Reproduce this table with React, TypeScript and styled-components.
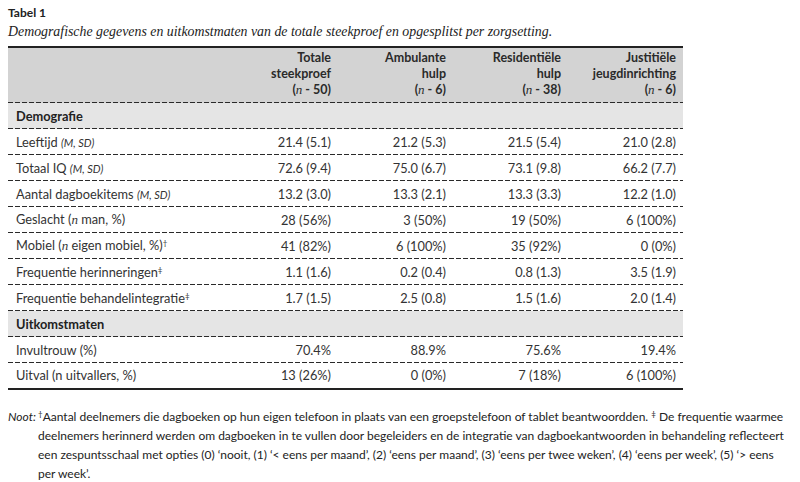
import React from "react";
import styled, { createGlobalStyle } from "styled-components";

const Global = createGlobalStyle`
  html, body { margin: 0; padding: 0; background: #fff; }
  body { font-family: Lato, "Open Sans", sans-serif; color: #2a2a2a; }
`;

const Page = styled.div`
  padding: 5px 8px 0 8px;
  width: 784px;
`;

const Title = styled.div`
  font-family: Lato, sans-serif;
  font-weight: 700;
  font-size: 12px;
  line-height: 15px;
  color: #222;
`;

const Caption = styled.div`
  font-family: "Liberation Serif", "DejaVu Serif", serif;
  font-style: italic;
  font-size: 13.85px;
  line-height: 20px;
  margin-top: 2px;
  color: #222;
`;

const dash = `repeating-linear-gradient(to right, #2a2a2a 0 5px, transparent 5px 7px)`;

const Table = styled.table`
  margin-top: 4px;
  width: 667px;
  border-collapse: collapse;
  border-top: 2px solid #222;
  border-bottom: 2px solid #222;
  table-layout: fixed;
  font-size: 12.8px;
`;

const HeadRow = styled.tr`
  background-color: #d3d3d3;
  background-image: ${dash};
  background-size: 100% 1px;
  background-position: left bottom;
  background-repeat: no-repeat;
`;

const HeadCell = styled.th`
  text-align: right;
  vertical-align: bottom;
  font-weight: 700;
  font-size: 12.5px;
  line-height: 16px;
  padding: 2px 7px 5px 0;
  height: 47px;
  color: #2a2a2a;
`;

const N = styled.i`
  font-family: "Liberation Serif", serif;
  font-weight: 400;
  font-size: 13px;
`;

const Row = styled.tr<{ $section?: boolean; $last?: boolean }>`
  height: 26px;
  background-color: ${(p) => (p.$section ? "#e5e5e5" : "#fff")};
  background-image: ${(p) => (p.$last ? "none" : dash)};
  background-size: 100% 1px;
  background-position: left bottom;
  background-repeat: no-repeat;
`;

const Label = styled.td<{ $bold?: boolean }>`
  text-align: left;
  padding: 0 0 1px 8px;
  font-weight: ${(p) => (p.$bold ? 700 : 400)};
  color: ${(p) => (p.$bold ? "#222" : "#333")};
  white-space: nowrap;
`;

const Cell = styled.td`
  text-align: right;
  padding: 0 7px 1px 0;
  white-space: nowrap;
  color: #333;
`;

const Em = styled.i`
  font-size: 11px;
`;

const Sup = styled.span`
  font-size: 8px;
  line-height: 1;
  vertical-align: 4px;
`;

const Note = styled.div`
  margin-top: 17px;
  display: grid;
  grid-template-columns: 30px 1fr;
  font-size: 12px;
  line-height: 19px;
  color: #222;
`;

const NoteLabel = styled.i``;

const cols = ["215px", "115px", "115px", "115px", "115px"];

type R = { label: React.ReactNode; v: string[] };

const demo: R[] = [
  { label: <>Leeftijd <Em>(M, SD)</Em></>, v: ["21.4 (5.1)", "21.2 (5.3)", "21.5 (5.4)", "21.0 (2.8)"] },
  { label: <>Totaal IQ <Em>(M, SD)</Em></>, v: ["72.6 (9.4)", "75.0 (6.7)", "73.1 (9.8)", "66.2 (7.7)"] },
  { label: <>Aantal dagboekitems <Em>(M, SD)</Em></>, v: ["13.2 (3.0)", "13.3 (2.1)", "13.3 (3.3)", "12.2 (1.0)"] },
  { label: <>Geslacht (<N>n</N> man, %)</>, v: ["28 (56%)", "3 (50%)", "19 (50%)", "6 (100%)"] },
  { label: <>Mobiel (<N>n</N> eigen mobiel, %)<Sup>†</Sup></>, v: ["41 (82%)", "6 (100%)", "35 (92%)", "0 (0%)"] },
  { label: <>Frequentie herinneringen<Sup>‡</Sup></>, v: ["1.1 (1.6)", "0.2 (0.4)", "0.8 (1.3)", "3.5 (1.9)"] },
  { label: <>Frequentie behandelintegratie<Sup>‡</Sup></>, v: ["1.7 (1.5)", "2.5 (0.8)", "1.5 (1.6)", "2.0 (1.4)"] },
];

const outcome: R[] = [
  { label: <>Invultrouw (%)</>, v: ["70.4%", "88.9%", "75.6%", "19.4%"] },
  { label: <>Uitval (n uitvallers, %)</>, v: ["13 (26%)", "0 (0%)", "7 (18%)", "6 (100%)"] },
];

const heads = [
  ["Totale", "steekproef", "50"],
  ["Ambulante", "hulp", "6"],
  ["Residentiële", "hulp", "38"],
  ["Justitiële", "jeugdinrichting", "6"],
];

export default function App() {
  return (
    <Page>
      <Global />
      <Title>Tabel 1</Title>
      <Caption>Demografische gegevens en uitkomstmaten van de totale steekproef en opgesplitst per zorgsetting.</Caption>
      <Table>
        <colgroup>
          {cols.map((w, i) => (
            <col key={i} style={{ width: w }} />
          ))}
        </colgroup>
        <thead>
          <HeadRow>
            <HeadCell />
            {heads.map((h) => (
              <HeadCell key={h[0]}>
                {h[0]}
                <br />
                {h[1]}
                <br />(<N>n</N> - {h[2]})
              </HeadCell>
            ))}
          </HeadRow>
        </thead>
        <tbody>
          <Row $section>
            <Label $bold>Demografie</Label>
            <Cell />
            <Cell />
            <Cell />
            <Cell />
          </Row>
          {demo.map((r, i) => (
            <Row key={i}>
              <Label>{r.label}</Label>
              {r.v.map((x, j) => (
                <Cell key={j}>{x}</Cell>
              ))}
            </Row>
          ))}
          <Row $section>
            <Label $bold>Uitkomstmaten</Label>
            <Cell />
            <Cell />
            <Cell />
            <Cell />
          </Row>
          {outcome.map((r, i) => (
            <Row key={i} $last={i === outcome.length - 1}>
              <Label>{r.label}</Label>
              {r.v.map((x, j) => (
                <Cell key={j}>{x}</Cell>
              ))}
            </Row>
          ))}
        </tbody>
      </Table>
      <Note>
        <NoteLabel>Noot:</NoteLabel>
        <div>
          <Sup>†</Sup>Aantal deelnemers die dagboeken op hun eigen telefoon in plaats van een groepstelefoon of tablet beantwoordden. <Sup>‡</Sup> De frequentie waarmee deelnemers herinnerd werden om dagboeken in te vullen door begeleiders en de integratie van dagboekantwoorden in behandeling reflecteert een zespuntsschaal met opties (0) ‘nooit, (1) ‘&lt; eens per maand’, (2) ‘eens per maand’, (3) ‘eens per twee weken’, (4) ‘eens per week’, (5) ‘&gt; eens per week’.
        </div>
      </Note>
    </Page>
  );
}
